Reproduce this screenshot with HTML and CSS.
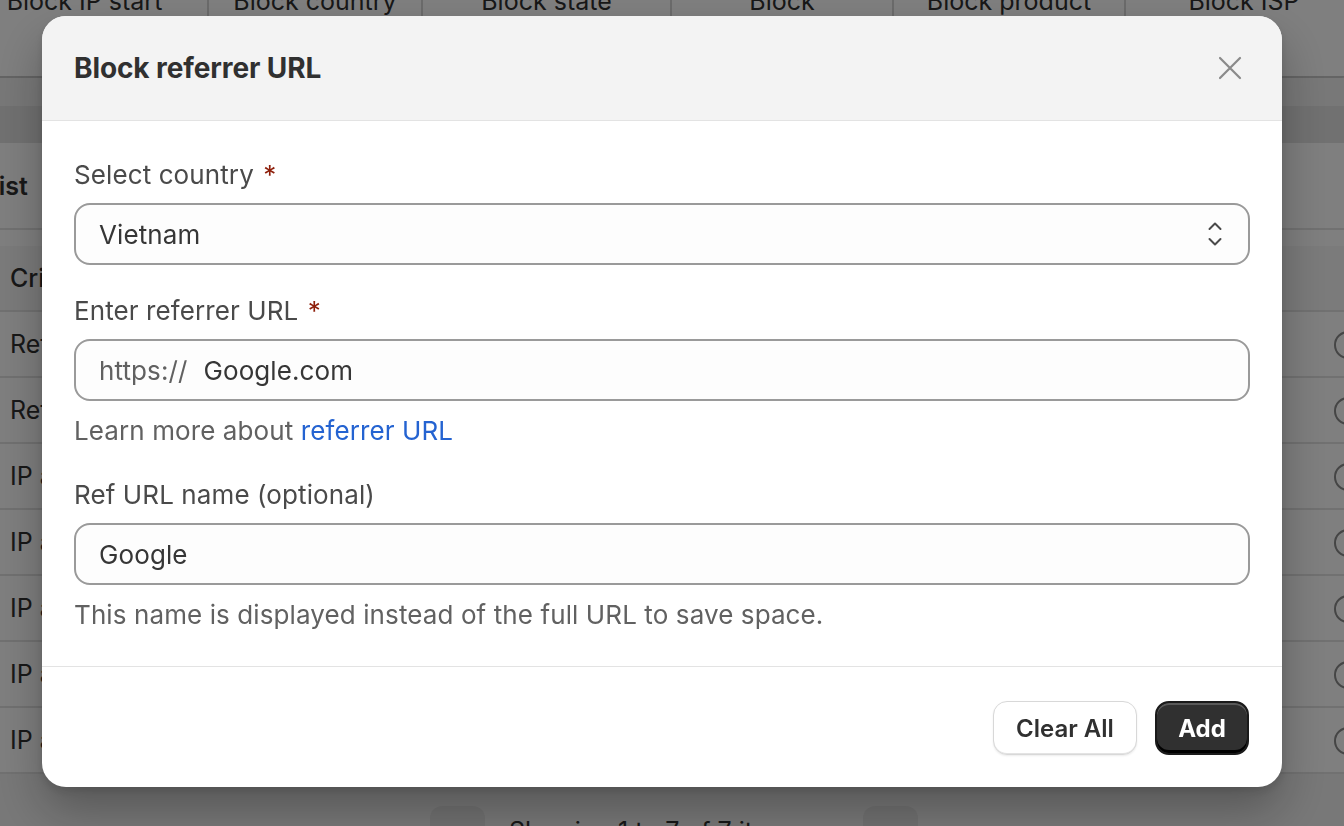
FILE: index.html
```html
<!DOCTYPE html>
<html lang="en">
<head>
<meta charset="utf-8">
<title>Block referrer URL</title>
<link rel="stylesheet" href="styles.css">
</head>
<body>
<div class="page">
  <div class="tabs-card">
    <div class="tabs">
      <div class="tab tab-first">Block IP start</div>
      <div class="tab tab-2">Block country</div>
      <div class="tab tab-3">Block state</div>
      <div class="tab tab-4">Block</div>
      <div class="tab tab-5">Block product</div>
      <div class="tab tab-6">Block ISP</div>
    </div>
  </div>
  <div class="list-card">
    <div class="list-band"></div>
    <div class="list-title">Blacklist</div>
    <div class="list-head">Criteria</div>
    <div class="row">Referrer URL<span class="radio"></span></div>
    <div class="row">Referrer URL<span class="radio"></span></div>
    <div class="row">IP address<span class="radio"></span></div>
    <div class="row">IP address<span class="radio"></span></div>
    <div class="row">IP address<span class="radio"></span></div>
    <div class="row">IP address<span class="radio"></span></div>
    <div class="row">IP address<span class="radio"></span></div>
  </div>
  <div class="pager">
    <span class="pager-btn"></span>
    <span class="pager-text">Showing 1 to 7 of 7 items</span>
    <span class="pager-btn"></span>
  </div>
</div>

<div class="overlay">
  <div class="modal">
    <div class="modal-header">
      <h2 class="modal-title">Block referrer URL</h2>
      <button class="close-btn" aria-label="Close">
        <svg width="24" height="24" viewBox="0 0 24 24"><path d="M2 2 L22 22 M22 2 L2 22" stroke="#8a8a8a" stroke-width="2.2" stroke-linecap="round" fill="none"/></svg>
      </button>
    </div>
    <div class="modal-body">
      <div class="label">Select country <span class="req">*</span></div>
      <div class="field select">
        <span class="value">Vietnam</span>
        <svg class="chevrons" width="16" height="26" viewBox="0 0 16 26"><path d="M2.5 8 L8 2.5 L13.5 8 M2.5 18 L8 23.5 L13.5 18" stroke="#4a4a4a" stroke-width="2" stroke-linecap="round" stroke-linejoin="round" fill="none"/></svg>
      </div>

      <div class="label gap-top">Enter referrer URL <span class="req">*</span></div>
      <div class="field">
        <span class="prefix">https://</span><span class="value">Google.com</span>
      </div>
      <div class="help">Learn more about <a class="link" href="#">referrer URL</a></div>

      <div class="label gap-top">Ref URL name (optional)</div>
      <div class="field">
        <span class="value">Google</span>
      </div>
      <div class="help">This name is displayed instead of the full URL to save space.</div>
    </div>
    <div class="modal-footer">
      <button class="btn btn-secondary">Clear All</button>
      <button class="btn btn-primary">Add</button>
    </div>
  </div>
</div>
</body>
</html>
```

FILE: styles.css
```css
* { box-sizing: border-box; }
html, body { margin: 0; padding: 0; }
body {
  width: 1344px;
  height: 826px;
  overflow: hidden;
  background: #f1f1f1;
  font-family: Inter, "Noto Sans", "Liberation Sans", sans-serif;
  color: #303030;
}

/* ---------- background page ---------- */
.page {
  display: flex;
  flex-direction: column;
  height: 826px;
}
.page > * { flex-shrink: 0; }
.tabs-card {
  margin: -40px -20px 0 -40px;
  height: 118px;
  background: #fff;
  border: 2px solid #c9c9c9;
  border-radius: 0 0 24px 24px;
}
.tabs {
  display: flex;
  height: 56px;
  margin-top: 11px;
}
.tab {
  display: flex;
  align-items: center;
  justify-content: center;
  font-size: 25px;
  color: #303030;
  border-right: 2px solid #d6d6d6;
}
.tab-first { width: 247px; }
.tab-2 { width: 214px; }
.tab-3 { width: 249px; }
.tab-4 { width: 222px; }
.tab-5 { width: 232px; }
.tab-6 { flex: 1; border-right: none; }

.list-card {
  margin-top: 28px;
  background: #fff;
  display: flex;
  flex-direction: column;
}
.list-card > * { flex-shrink: 0; }
.list-band {
  height: 37px;
  background: #e3e3e3;
}
.list-title {
  height: 87px;
  display: flex;
  align-items: center;
  padding-left: 8px;
  margin-left: -82px;
  font-size: 25px;
  font-weight: 600;
  border-bottom: 2px solid #e3e3e3;
}
.list-head, .row {
  height: 66px;
  display: flex;
  align-items: center;
  padding-left: 10px;
  font-size: 25px;
  border-bottom: 2px solid #e3e3e3;
  position: relative;
}
.list-head { margin-top: 16px; background: #f7f7f7; font-weight: 500; }
.radio {
  position: absolute;
  left: 1334px;
  top: 19px;
  width: 28px;
  height: 28px;
  border-radius: 50%;
  border: 2px solid #8a8a8a;
  background: #fff;
}
.pager {
  display: flex;
  align-items: flex-start;
  padding-left: 430px;
  margin-top: 32px;
  gap: 24px;
}
.pager-btn {
  width: 55px;
  height: 50px;
  border-radius: 12px;
  background: #e3e3e3;
}
.pager-text {
  width: 330px;
  font-size: 25px;
  padding-top: 10px;
}

/* ---------- modal ---------- */
.overlay {
  position: fixed;
  inset: 0;
  background: rgba(0, 0, 0, 0.5);
  padding: 16px 0 0 42px;
}
.modal {
  width: 1240px;
  background: #fff;
  border-radius: 24px;
  overflow: hidden;
  box-shadow: 0 24px 48px rgba(0, 0, 0, 0.28), 0 4px 10px rgba(0, 0, 0, 0.12);
  display: flex;
  flex-direction: column;
}
.modal-header {
  height: 105px;
  background: #f3f3f3;
  border-bottom: 1px solid #e3e3e3;
  display: flex;
  align-items: center;
  justify-content: space-between;
  padding: 0 40px 0 32px;
}
.modal-title {
  margin: 0;
  font-size: 28px;
  font-weight: 700;
  color: #303030;
  letter-spacing: -0.1px;
}
.close-btn {
  border: none;
  background: none;
  padding: 0;
  width: 24px;
  height: 24px;
  display: flex;
}

.modal-body {
  padding: 36px 32px 33px 32px;
  display: flex;
  flex-direction: column;
}
.label {
  height: 36px;
  line-height: 36px;
  font-size: 26px;
  letter-spacing: 0.1px;
  color: #4a4a4a;
  margin-bottom: 10px;
}
.label.gap-top { margin-top: 28px; }
.req { color: #8e1f0b; margin-left: 2px; }
.field {
  height: 62px;
  border: 2px solid #9a9a9a;
  border-radius: 16px;
  background: #fdfdfd;
  display: flex;
  align-items: center;
  padding: 0 25px 0 23px;
  font-size: 26px;
  letter-spacing: 0.1px;
}
.field .value { color: #363636; }
.select { justify-content: space-between; }
.chevrons { display: block; }
.prefix { color: #616161; margin-right: 16px; }
.help {
  margin-top: 12px;
  height: 36px;
  line-height: 36px;
  font-size: 26px;
  letter-spacing: 0.1px;
  color: #616161;
}
.link { color: #2463d1; text-decoration: none; }

.modal-footer {
  border-top: 1px solid #e3e3e3;
  padding: 34px 33px 32px 0;
  display: flex;
  justify-content: flex-end;
  gap: 18px;
}
.btn {
  height: 54px;
  border-radius: 14px;
  font-family: Inter, "Noto Sans", "Liberation Sans", sans-serif;
  font-size: 24px;
  font-weight: 600;
  cursor: pointer;
}
.btn-secondary {
  width: 144px;
  background: #fff;
  color: #303030;
  border: 1.5px solid #d8d8d8;
  box-shadow: 0 -1px 0 #e3e3e3 inset, 0 1px 2px rgba(0,0,0,0.08);
}
.btn-primary {
  width: 94px;
  background: #303030;
  color: #fff;
  font-weight: 700;
  border: 2px solid #1a1a1a;
  box-shadow: inset 0 -3px 0 #000, inset 0 2px 0 rgba(255,255,255,0.2);
}
```
